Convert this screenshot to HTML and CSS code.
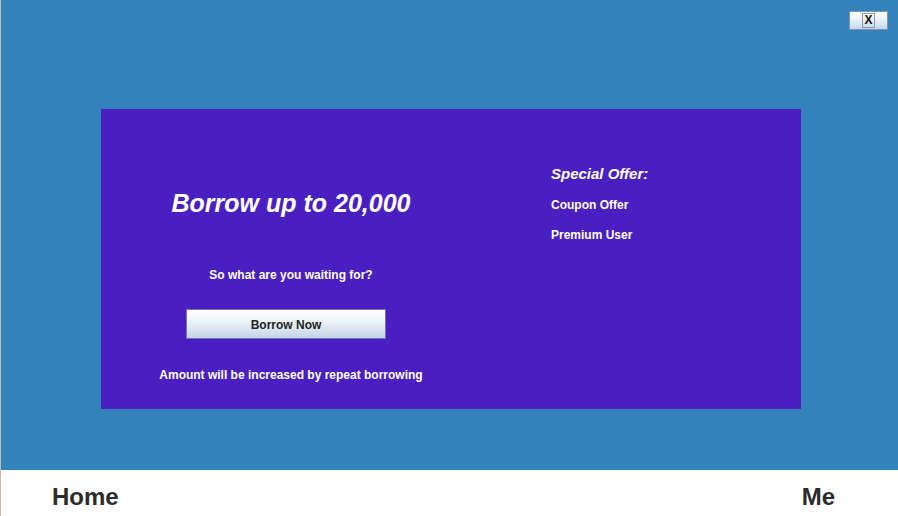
FILE: index.html
```html
<!DOCTYPE html>
<html>
<head>
<meta charset="utf-8">
<link rel="stylesheet" href="styles.css">
</head>
<body>
<div class="app">
  <div class="main">
    <div class="topbar">
      <button class="close"><span class="close-label">X</span></button>
    </div>
    <div class="panel">
      <div class="left">
        <h1 class="headline">Borrow up to 20,000</h1>
        <p class="sub">So what are you waiting for?</p>
        <button class="borrow">Borrow Now</button>
        <p class="note">Amount will be increased by repeat borrowing</p>
      </div>
      <div class="right">
        <h2 class="offer-title">Special Offer:</h2>
        <p class="offer">Coupon Offer</p>
        <p class="offer">Premium User</p>
      </div>
    </div>
  </div>
  <div class="nav">
    <span class="nav-item">Home</span>
    <span class="nav-item">Me</span>
  </div>
</div>
</body>
</html>
```

FILE: styles.css
```css
html, body {
  margin: 0;
  padding: 0;
  background: #ffffff;
  font-family: "Liberation Sans", Arial, sans-serif;
}
.app {
  width: 898px;
  height: 516px;
  display: flex;
  flex-direction: column;
  border-left: 1px solid #c9b9aa;
  box-sizing: border-box;
}
.main {
  height: 470px;
  background: #3382bc;
  display: flex;
  flex-direction: column;
}
.topbar {
  height: 109px;
  display: flex;
  justify-content: flex-end;
  align-items: flex-start;
  padding: 11px 10px 0 0;
  box-sizing: border-box;
}
.close {
  width: 39px;
  height: 19px;
  padding: 0;
  border: 1px solid #7f93ae;
  background: linear-gradient(#ffffff, #e9f1f8 45%, #c3d5e8);
  display: flex;
  align-items: center;
  justify-content: center;
}
.close-label {
  font: bold 12px "Liberation Sans", Arial, sans-serif;
  color: #111;
  border: 1px solid #8a9bb0;
  padding: 0 1px;
  line-height: 13px;
}
.panel {
  margin-left: 100px;
  width: 700px;
  height: 300px;
  background: #4a1fc1;
  display: flex;
  color: #ffffff;
}
.left {
  width: 380px;
  display: flex;
  flex-direction: column;
  align-items: center;
}
.headline {
  margin: 79px 0 0;
  font-size: 25px;
  font-weight: bold;
  font-style: italic;
  line-height: 30px;
}
.sub {
  margin: 50px 0 0;
  font-size: 12px;
  font-weight: bold;
  line-height: 14px;
}
.borrow {
  margin: 27px 0 0 -10px;
  width: 200px;
  height: 30px;
  border: 1px solid #7a70b8;
  background: linear-gradient(#ffffff, #eef4f9 40%, #c4d4e7);
  font: bold 12px "Liberation Sans", Arial, sans-serif;
  color: #222;
  padding: 1px 0 0;
}
.note {
  margin: 29px 0 0;
  font-size: 12px;
  font-weight: bold;
  line-height: 14px;
}
.right {
  padding-left: 70px;
  display: flex;
  flex-direction: column;
}
.offer-title {
  margin: 56px 0 0;
  font-size: 15px;
  font-weight: bold;
  font-style: italic;
  line-height: 18px;
}
.offer {
  margin: 14px 0 0;
  font-size: 12px;
  font-weight: bold;
  line-height: 16px;
}
.nav {
  flex: 1;
  display: flex;
  justify-content: space-between;
  align-items: center;
  padding: 7px 63px 0 51px;
  box-sizing: border-box;
}
.nav-item {
  font-size: 24px;
  font-weight: bold;
  color: #2b2b2b;
}
```
